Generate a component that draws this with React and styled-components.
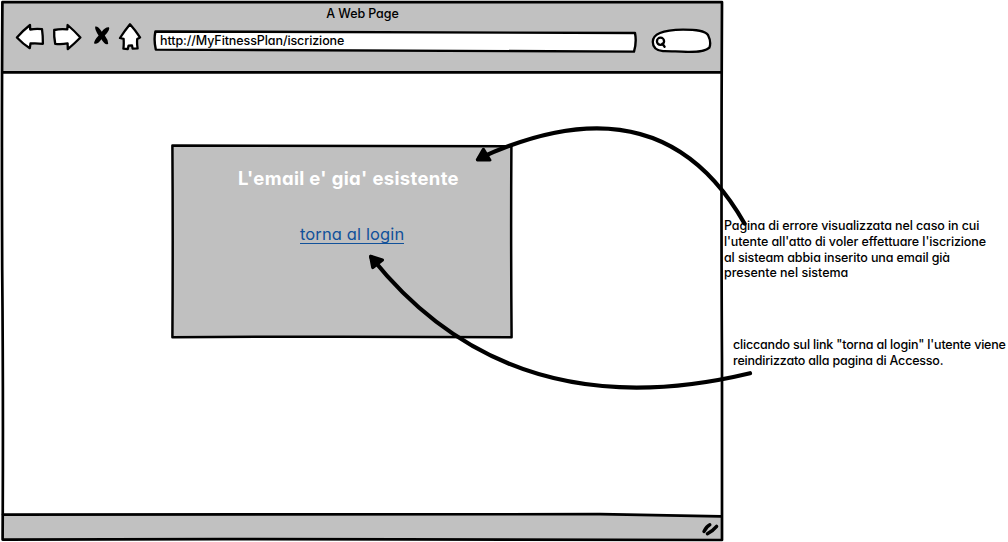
import React from 'react';
import styled, { createGlobalStyle } from 'styled-components';

const Global = createGlobalStyle`
  body { margin: 0; background: #fff; }
  * { box-sizing: border-box; }
`;

const Board = styled.main`
  position: relative;
  display: flex;
  width: 1008px;
  height: 542px;
  overflow: hidden;
  color: #000;
  font: 500 12.5px/16px Inter, "Open Sans", sans-serif;
  font-feature-settings: "cv11" 1;
`;

const BrowserWindow = styled.section`
  position: relative;
  flex: none;
  display: flex;
  flex-direction: column;
  width: 723px;
  height: 541px;
  padding: 2px 1px 2px 2px;
`;

const Chrome = styled.header`
  height: 71px;
  padding: 4px 10px 0 13px;
  background: #c1c1c1;
`;

const Title = styled.div`
  text-align: center;
  padding-right: 2px;
  height: 17px;
`;

const Toolbar = styled.div`
  display: flex;
  align-items: flex-start;
`;

const NavIcons = styled.svg`
  flex: none;
  width: 130px;
  height: 30px;
  margin-right: 8px;
`;

const Field = styled.div`
  position: relative;
  flex: none;
  width: ${p => p.$width}px;
  height: 25px;
  margin: 5px ${p => p.$gap || 0}px 0 0;
  padding: 5px 0 0 7px;
`;

const FieldShape = styled.svg`
  position: absolute;
  inset: 0;
  width: 100%;
  height: 100%;
`;

const Text = styled.span`
  position: relative;
  display: inline-block;
  white-space: nowrap;
  letter-spacing: ${p => p.$track || 0}px;
`;

const Page = styled.div`
  flex: 1;
  padding: 73px 0 0 170px;
`;

const Card = styled.div`
  display: flex;
  flex-direction: column;
  align-items: flex-start;
  width: 340px;
  height: 192px;
  padding: 20px 0 0 66px;
  background: #c0c0c0;
`;

const Heading = styled.h1`
  margin: 0;
  color: #fff;
  font-size: 18.5px;
  line-height: 25px;
  font-weight: 700;
`;

const Link = styled.a`
  margin: 33px 0 0 62px;
  height: 20px;
  border-bottom: 1px solid #11519a;
  color: #11519a;
  font-size: 16.5px;
  line-height: 20px;
  font-weight: 400;
`;

const StatusBar = styled.footer`
  height: 24px;
  background: #c1c1c1;
`;

const Overlay = styled.svg`
  position: absolute;
  left: 0;
  top: 0;
  pointer-events: none;
`;

const Notes = styled.aside`
  display: flex;
  flex-direction: column;
  padding: 218px 0 0 1px;
`;

const Note = styled.p`
  display: flex;
  flex-direction: column;
  align-items: flex-start;
  margin: 0 0 ${p => p.$after || 0}px ${p => p.$indent || 0}px;
  line-height: 15.8px;
`;

const notes = [
  { after: 56, lines: [
    ['Pagina di errore visualizzata nel caso in cui', -0.11],
    ["l'utente all'atto di voler effettuare l'iscrizione", -0.1],
    ['al sisteam abbia inserito una email già', -0.11],
    ['presente nel sistema', 0],
  ] },
  { indent: 9, lines: [
    ['cliccando sul link "torna al login" l\'utente viene', -0.18],
    ['reindirizzato alla pagina di Accesso.', -0.2],
  ] },
];

export default function App() {
  return (
    <>
      <Global />
      <Board>
        <BrowserWindow>
          <Chrome>
            <Title><Text $track={-0.1}>A Web Page</Text></Title>
            <Toolbar>
              <NavIcons viewBox="15 23 130 30" fill="#fff" stroke="#000" strokeWidth="2.3" strokeLinejoin="round" strokeLinecap="round">
                <path d="M16.9 37.5Q23 30.5 30 25L30.2 29.5Q36 28.6 42 29.2Q43 36 42.9 43.8Q36 43 30.5 43.5L29.8 48.2Q23 44 16.9 37.5Z" />
                <path d="M80.4 37.5Q74 30.5 67.6 25L67.3 29.4Q60 28.8 54.2 30Q53.8 36 55.2 43.8Q61 44.6 67.6 43.4L67.8 49.2Q74 44 80.4 37.5Z" />
                <path d="M95.2 26.6Q98.2 26 101.8 31.8Q105 26.8 109 27.2Q110.4 29.4 104.8 35.6Q108.2 40 108.2 43.8Q105.4 46 101.4 39.2Q97.6 44.8 94.2 43.6Q93.4 41 98.6 35.4Q94.6 30 95.2 26.6Z" fill="#000" stroke="none" />
                <path d="M130 24.3Q135.5 30.5 140 37.4L137.2 39Q136.8 44 137.6 48.4L132.6 48.6L132 45.4L128.6 45.6L127.8 49L123.4 48.6Q124 44 123.6 38.8L120 38Q124.5 31 130 24.3Z" />
              </NavIcons>
              <Field $width={484} $gap={13}>
                <FieldShape viewBox="153 28 484 25" fill="#fff" stroke="#000" strokeWidth="2.4" strokeLinejoin="round">
                  <path d="M155.4 31.5Q350 31.3 635 33Q636.8 42 634 51.6Q400 51.6 155.8 49.6Q153.6 40 155.4 31.5Z" />
                </FieldShape>
                <Text $track={-0.09}>http://MyFitnessPlan/iscrizione</Text>
              </Field>
              <Field $width={62}>
                <FieldShape viewBox="650 28 62 25" fill="#fff" stroke="#000" strokeWidth="2.3" strokeLinecap="round">
                  <path d="M652.8 42C652.6 34 662 30 683 29.6C696 29.6 705 30.4 708 35C710 39 710.8 44 709.4 47.6C706 51 698 52 688 51.9C676 51.6 668 51 663 51.2C656 50.4 652.8 47 652.8 42Z" />
                  <circle cx="660.5" cy="41.3" r="3.6" />
                  <path d="M662.4 43.8L664.6 46.8" />
                </FieldShape>
              </Field>
            </Toolbar>
          </Chrome>
          <Page>
            <Card>
              <Heading><Text $track={0.34}>L'email e' gia' esistente</Text></Heading>
              <Link><Text $track={0.12}>torna al login</Text></Link>
            </Card>
          </Page>
          <StatusBar />
        </BrowserWindow>
        <Overlay width="1008" height="542" fill="none" stroke="#000" strokeWidth="2.7" strokeLinejoin="round" strokeLinecap="round">
          <path d="M2.4 2.2Q360 1.6 722 2.2Q721 200 722 360Q722.4 460 722 540Q560 540.4 400 539.4Q200 538.6 2.6 539.6Q3.4 400 2.2 270Q1.6 120 2.4 2.2Z" />
          <path d="M3 72.3Q360 73 721 72.3" />
          <path d="M3 514.6Q300 514 600 514.2Q670 515.4 721 516.4" />
          <path d="M172.4 145.6Q340 146.6 511.4 146.2Q510.8 240 511.6 337.2Q340 336.2 172.4 337.2Q173 240 172.4 145.6Z" strokeWidth="2.5" />
          <path d="M704 531.4Q706.4 526.6 709.8 524.8M707.4 533.8Q713 530.8 716.6 526.4" strokeWidth="3.4" />
        </Overlay>
        <Notes>
          {notes.map((n, i) => (
            <Note key={i} $after={n.after} $indent={n.indent}>
              {n.lines.map(([text, track]) => <Text key={text} $track={track}>{text}</Text>)}
            </Note>
          ))}
        </Notes>
        <Overlay width="1008" height="542" fill="none" stroke="#000" strokeWidth="4.2" strokeLinejoin="round" strokeLinecap="round">
          <path d="M744.5 223.5Q660 74.8 479 158.5" />
          <path d="M750 373.2Q510 430.8 371.5 257.5" />
          <path d="M477.4 159.8L483.4 149.4L489.8 160ZM370.6 256.2L382.4 260L372.8 267.6Z" fill="#000" strokeWidth="3.2" />
        </Overlay>
      </Board>
    </>
  );
}
